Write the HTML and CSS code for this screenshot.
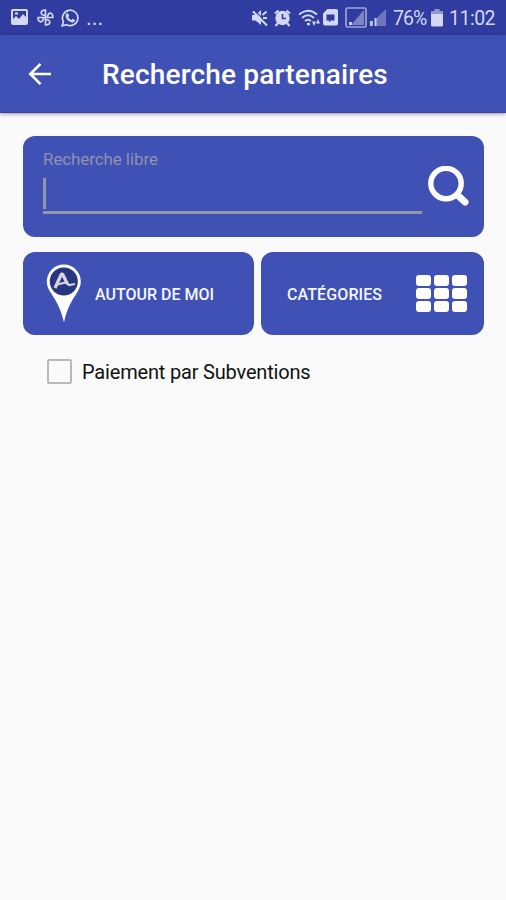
FILE: index.html
```html
<!DOCTYPE html>
<html lang="fr">
<head>
<meta charset="utf-8">
<title>Recherche partenaires</title>
<link rel="stylesheet" href="styles.css">
</head>
<body>
<header>
  <div class="status">
    <div class="status-left">
      <svg width="17" height="17" viewBox="0 0 17 17"><path fill="currentColor" fill-rule="evenodd" d="M2 0h13a2 2 0 0 1 2 2v12a2 2 0 0 1-2 2H2a2 2 0 0 1-2-2V2a2 2 0 0 1 2-2zm0 2v8l3-3 3 3 4-5 3 3V2zM4 3.500h3v2H4z"/></svg>
      <svg class="fan" width="17" height="17" viewBox="0 0 17 17"><g fill="none" stroke="currentColor" stroke-width="1.700"><path d="M8.500 8.500V1.200C3 .5 2.500 6.500 8.500 6.500"/><path d="M8.500 8.500V1.200C3 .5 2.500 6.500 8.500 6.500" transform="rotate(90 8.500 8.500)"/><path d="M8.500 8.500V1.200C3 .5 2.500 6.500 8.500 6.500" transform="rotate(180 8.500 8.500)"/><path d="M8.500 8.500V1.200C3 .5 2.500 6.500 8.500 6.500" transform="rotate(270 8.500 8.500)"/></g></svg>
      <svg class="phone" width="18" height="18" viewBox="0 0 18 18"><path fill="none" stroke="currentColor" stroke-width="1.700" d="M1.200 16.800l1.200-4.200A7.700 7.700 0 1 1 5.500 15.700z"/><path fill="currentColor" d="M5.500 4.500l1.500-.2 1.200 2.500-1 1.200c.8 1.500 1.700 2.300 3.200 3l1.200-1.200 2.300 1.200c.1 1.800-1.400 2.700-2.800 2.400C7.500 12.700 5 10 4.600 7.200c-.1-1.100.2-2 .9-2.700z"/></svg>
      <span class="more">...</span>
    </div>
    <div class="status-right">
      <svg class="mute" width="16" height="18" viewBox="0 0 16 18"><path fill="currentColor" d="M0 6h3.500L9 1v15l-5.500-4.500H0z"/><path stroke="#303c9f" stroke-width="1.200" d="M2 1l14 14"/><path stroke="currentColor" stroke-width="2" d="M1 2.500l14 14M10.500 6l4-3.500M11 9h4"/></svg>
      <svg class="alarm" width="17" height="18" viewBox="0 0 17 18"><path fill="none" stroke="currentColor" stroke-width="2.200" d="M1 4.500L4.500 1.500M16 4.500L12.500 1.500M4 14l-2.500 3M13 14l2.500 3"/><circle cx="8.500" cy="9" r="7.200" fill="currentColor"/><path fill="none" stroke="#303c9f" stroke-width="1.600" d="M8.500 5v4.500H12"/></svg>
      <svg class="wifi" width="22" height="18" viewBox="0 0 22 18"><g fill="none" stroke="currentColor" stroke-width="1.900"><path d="M0 5.500Q9 -2 18 5.500M3 9Q9 3.500 15 9M6 12Q9 9.500 12 12"/></g><circle cx="9.500" cy="15" r="1.600" fill="currentColor"/><path fill="currentColor" d="M13 12.500h4l-2 4.500zM17 14.500l2-4.500 2 4.500z"/></svg>
      <svg class="sim" width="15" height="17" viewBox="0 0 15 17"><path fill="currentColor" fill-rule="evenodd" d="M4.500 0H13a2 2 0 0 1 2 2v12.500a2 2 0 0 1-2 2H2a2 2 0 0 1-2-2v-10zM3.500 5.500v6H6v2l2-2h3.500v-6z"/></svg>
      <svg class="signal-box" width="22" height="21" viewBox="0 0 22 21"><rect x="1" y="1" width="20" height="19" rx="1.500" fill="none" stroke="#9ea5d8" stroke-width="1.700"/><path fill="#7c84c5" d="M19 3v15H6z"/><path fill="#c7cbed" d="M4 15h3v3H4z"/></svg>
      <svg class="signal" width="16" height="18" viewBox="0 0 16 18"><path fill="#6d76bf" d="M5 10.500L16 0v17H5z"/><path fill="#c7cbed" d="M0 12h2.700v5H0zM4.500 9h2v8h-2z"/></svg>
      <span class="percent">76%</span>
      <svg class="battery" width="12" height="18" viewBox="0 0 12 18"><path fill="#9299d0" d="M3.500 0h5v2H12v5H0V2h3.500z"/><path fill="currentColor" d="M0 5h12v11a1.500 1.500 0 0 1-1.500 1.500h-9A1.500 1.500 0 0 1 0 16z"/></svg>
      <span class="clock">11:02</span>
    </div>
  </div>
  <div class="appbar">
    <svg class="back" width="24" height="24" viewBox="0 0 24 24"><path fill="none" stroke="#fff" stroke-width="2.600" d="M24 12H3.500M13.500 1.800L3.300 12l10.200 10.200"/></svg>
    <h1>Recherche partenaires</h1>
  </div>
</header>
<main>
  <section class="search">
    <div class="field">
      <label>Recherche libre</label>
      <div class="input"><i class="caret"></i></div>
    </div>
    <svg class="lens" width="44" height="44" viewBox="0 0 44 44"><circle cx="19" cy="17.500" r="15.200" fill="none" stroke="#fff" stroke-width="5.400"/><path stroke="#fff" stroke-width="7" stroke-linecap="round" d="M31 29.500l7 6.500"/></svg>
  </section>
  <div class="actions">
    <div class="button around">
      <svg width="36" height="60" viewBox="0 0 36 60"><path fill="#fff" d="M.8 17.500a17 17 0 0 1 34 0C34.800 29 24 32 18 58.500 12 32 .8 29 .8 17.500z"/><circle cx="17.800" cy="17.500" r="14" fill="#28367f"/><path fill="none" stroke="#d8d4df" stroke-width="3.200" stroke-linejoin="bevel" d="M9 24l6.500-14h1l5 10"/><path fill="none" stroke="#d8d4df" stroke-width="2.200" d="M11 20.500l9-2 3 2.500 6-1"/></svg>
      <span>AUTOUR DE MOI</span>
    </div>
    <div class="button categories">
      <span>CATÉGORIES</span>
      <div class="grid"><i></i><i></i><i></i><i></i><i></i><i></i><i></i><i></i><i></i></div>
    </div>
  </div>
  <div class="option"><i class="box"></i><span>Paiement par Subventions</span></div>
</main>
</body>
</html>
```
FILE: styles.css
```css
* { box-sizing: border-box; }
body { margin: 0; height: 900px; background: #fafafa; font-family: Roboto, "Liberation Sans", sans-serif; overflow: hidden; }
svg { display: block; flex: none; }
span, h1, label { white-space: nowrap; }
.status { height: 35px; background: #303c9f; color: #d3d8f5; display: flex; justify-content: space-between; padding: 0 11px; }
.status-left, .status-right { display: flex; align-items: center; height: 35px; }
.fan { margin-left: 9px; }
.phone { margin-left: 7px; }
.more { margin-left: 7px; font-size: 22px; line-height: 35px; }
.alarm { margin-left: 6px; }
.wifi { margin-left: 8px; }
.sim { margin-left: 2px; }
.signal-box { margin-left: 7px; }
.signal { margin-left: 3px; }
.percent { width: 35px; margin-left: 7px; font-size: 19.500px; line-height: 38px; letter-spacing: -1px; padding-top: 3px; }
.battery { margin-left: 3px; }
.clock { width: 46px; margin-left: 6px; font-size: 19.500px; line-height: 38px; letter-spacing: -.5px; padding-top: 3px; }
.appbar { height: 78px; background: #3f51b5; border-bottom: 1px solid #3545a3; box-shadow: 0 1px 4px rgba(0,0,0,.4); display: flex; align-items: center; padding-left: 27px; }
h1 { margin: 3px 0 0 51px; color: #fff; font-size: 28px; font-weight: 500; line-height: 36px; letter-spacing: .18px; }
main { padding: 23px 22px 0 23px; }
.search { height: 101px; background: #3f51b5; border-radius: 12px; padding: 0 13px 0 19px; display: flex; justify-content: space-between; }
.field { width: 380px; padding-top: 12px; }
label { display: block; height: 23px; margin-left: 1px; font-size: 17px; line-height: 23px; letter-spacing: -.1px; color: #8f91ae; }
.input { height: 43px; margin-left: 1px; border-bottom: 3px solid #9295b0; padding-top: 7px; }
.caret { display: block; width: 3px; height: 31px; background: #9295b0; }
.lens { margin: 30px 0 0; }
.actions { display: flex; gap: 7px; margin-top: 15px; }
.button { height: 83px; background: #3f51b5; border-radius: 12px; color: #f5f6ff; font-size: 16px; font-weight: 500; display: flex; align-items: center; }
.around { width: 231px; padding-left: 23px; gap: 13px; }
.categories { width: 223px; padding: 0 17px 0 26px; justify-content: space-between; }
.button span { line-height: 20px; padding-top: 2px; }
.categories span { letter-spacing: .1px; }
.grid { display: grid; grid-template-columns: repeat(3, 15px); grid-auto-rows: 11px; gap: 2px 3px; }
.grid i { background: #fff; border-radius: 3px; }
.option { display: flex; align-items: center; margin-top: 24px; padding-left: 24px; height: 25px; gap: 10px; color: #111; font-size: 20px; letter-spacing: -.18px; }
.box { width: 25px; height: 25px; border: 2px solid #b9b9b9; border-radius: 2px; }
```
